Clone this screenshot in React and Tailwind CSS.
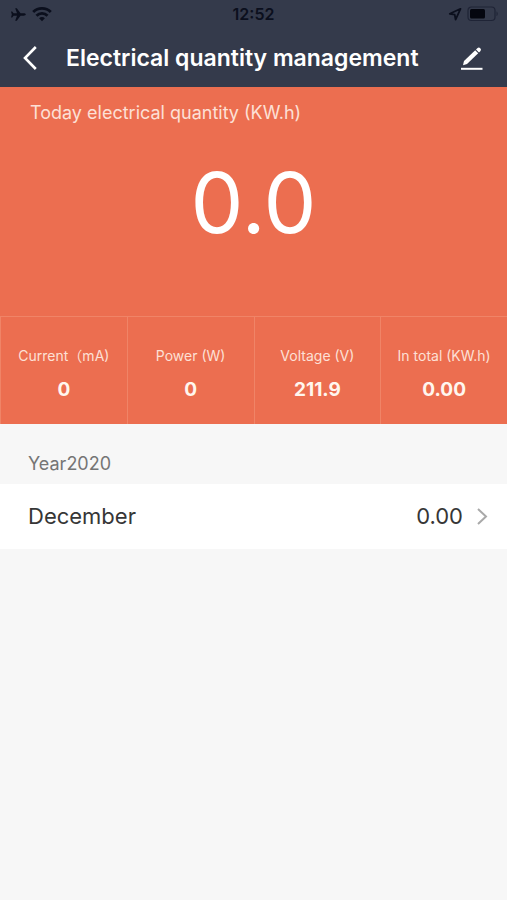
// src/App.jsx
import React from 'react';

const stats = [
  { label: 'Current（mA)', value: '0' },
  { label: 'Power (W)', value: '0' },
  { label: 'Voltage (V)', value: '211.9' },
  { label: 'In total (KW.h)', value: '0.00' },
];

const months = [{ name: 'December', value: '0.00' }];

function StatusBar() {
  return (
    <div className="grid h-7 grid-cols-3 items-center pr-2 pl-2 text-[#0b0f1d]">
      <div className="flex items-center gap-1">
        <svg width="20" height="16" viewBox="0 0 20 16" fill="currentColor" aria-hidden="true">
          <path d="M17.800 8.500c0 .7-1 1.200-2.300 1.200h-3L8.800 14.700H7.200L9 9.700H5.600L4.200 11.500H3l.8-3L3 5.500h1.200l1.400 1.800H9L7.200 2.300h1.600l3.700 5h3c1.300 0 2.300.5 2.300 1.200z" />
        </svg>
        <svg width="20" height="16" viewBox="0 0 20 16" fill="none" stroke="currentColor" strokeWidth="2.800" aria-hidden="true">
          <path d="M1.200 6a12.400 12.400 0 0 1 17.600 0" />
          <path d="M4.500 9.700a7.700 7.700 0 0 1 11 0" />
          <path d="M10 15.200l-2.900-2.900a4 4 0 0 1 5.800 0z" fill="currentColor" stroke="none" />
        </svg>
      </div>
      <div className="text-center text-base font-semibold">12:52</div>
      <div className="flex items-center justify-end gap-1">
        <svg width="14" height="14" viewBox="0 0 14 14" fill="none" stroke="currentColor" strokeWidth="1.800" strokeLinejoin="round" aria-hidden="true">
          <path d="M12.500 1.800L1.800 6.800l4.900.9.900 4.900z" />
        </svg>
        <svg width="33" height="16" viewBox="0 0 33 16" aria-hidden="true">
          <rect x="2" y="1" width="27" height="13.500" rx="3.500" fill="none" stroke="#1f2436" strokeWidth="1.200" />
          <rect x="4" y="3" width="15" height="9.500" rx="1.500" fill="#04060f" />
          <path d="M30.500 5.500c1.600.6 1.600 4 0 4.600z" fill="#1f2436" />
        </svg>
      </div>
    </div>
  );
}

function Header() {
  return (
    <header className="bg-[#343a4b] text-white">
      <StatusBar />
      <div className="flex h-[59px] items-center px-5">
        <button aria-label="Back" className="flex w-[46px] items-center">
          <svg width="20" height="28" viewBox="0 0 20 28" fill="none" stroke="currentColor" strokeWidth="2.600" aria-hidden="true">
            <path d="M15.800 3L5 14l10.800 11" />
          </svg>
        </button>
        <h1 className="flex-1 pt-[2px] text-[23px] font-semibold whitespace-nowrap">Electrical quantity management</h1>
        <button aria-label="Edit" className="flex">
          <svg width="28" height="26" viewBox="0 0 28 26" fill="currentColor" aria-hidden="true">
            <path d="M4 20.200l1-4.200L16.200 5.300l3 3L8 19z" />
            <path d="M17 4.500l1.300-1.200a2.100 2.100 0 0 1 3 3L20 7.500z" />
            <path d="M2 22.800h21.500v2H2z" />
          </svg>
        </button>
      </div>
    </header>
  );
}

function Stat({ label, value }) {
  return (
    <div className="flex flex-col items-center border-l border-[#f08467] pt-[29px]">
      <dt className="text-[14px] leading-5 whitespace-nowrap text-[#fde0d6]">{label}</dt>
      <dd className="mt-[10px] text-[19px] leading-7 font-bold text-[#fff6ee]">{value}</dd>
    </div>
  );
}

export default function App() {
  return (
    <div className="min-h-screen bg-[#f7f7f7] font-['Inter','Noto_Sans_CJK_SC',sans-serif]">
      <Header />
      <section className="bg-[#ec6e50]">
        <div className="h-[229px] pt-3">
          <h2 className="pl-[30px] text-lg leading-7 text-[#fde0d6]">Today electrical quantity (KW.h)</h2>
          <div className="mt-5 text-center text-[84px] leading-[112px] font-normal text-white">0.0</div>
        </div>
        <dl className="grid h-[108px] grid-cols-4 border-t border-[#f08467]">
          {stats.map((s) => (
            <Stat key={s.label} label={s.label} value={s.value} />
          ))}
        </dl>
      </section>
      <section>
        <h2 className="px-7 pt-[26px] pb-[6px] text-lg leading-7 text-[#757575]">Year2020</h2>
        <ul>
          {months.map((m) => (
            <li key={m.name}>
              <button className="flex h-[65px] w-full items-center bg-white pr-[18px] pl-7 text-[22px] text-[#363636]">
                <span className="flex-1 text-left">{m.name}</span>
                <span>{m.value}</span>
                <svg className="ml-3" width="14" height="20" viewBox="0 0 14 20" fill="none" stroke="#a9a9a9" strokeWidth="2" aria-hidden="true">
                  <path d="M3 2l8 7.500L3 17" />
                </svg>
              </button>
            </li>
          ))}
        </ul>
      </section>
    </div>
  );
}
